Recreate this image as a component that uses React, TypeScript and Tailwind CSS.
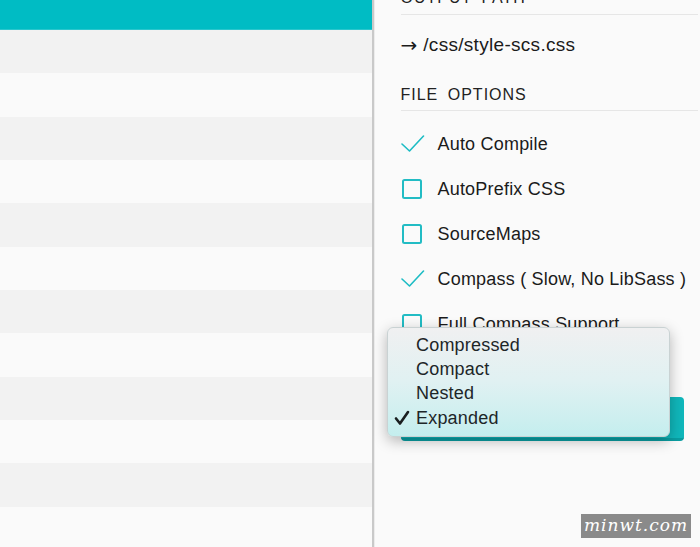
import React from "react";

const rows = Array.from({ length: 12 }, (_, i) => i);

function Check() {
  return (
    <svg width="24" height="20" viewBox="0 0 24 20" className="shrink-0">
      <path d="M1 10 L8.5 17 L22.5 2" fill="none" stroke="#1dbcc4" strokeWidth="1.6" strokeLinecap="round" strokeLinejoin="round" />
    </svg>
  );
}

function Box() {
  return (
    <div className="w-[24px] shrink-0 flex">
      <div className="ml-[1px] w-[20px] h-[20px] rounded-[2.5px] border-2 border-[#22bcc4]" />
    </div>
  );
}

function Item({ checked, label }: { checked: boolean; label: string }) {
  return (
    <div className="h-[45px] flex items-center">
      {checked ? <Check /> : <Box />}
      <span className="ml-[13px] text-[18px] text-[#1b1b1b] leading-[24px] tracking-[0.2px]">{label}</span>
    </div>
  );
}

export default function App() {
  return (
    <div
      className="relative w-[700px] h-[547px] overflow-hidden flex bg-[#fafafa]"
      style={{ fontFamily: '"Liberation Sans", Arial, sans-serif' }}
    >
      {/* left list */}
      <div className="w-[372px] shrink-0 flex flex-col">
        <div className="h-[30px] shrink-0 bg-[#00bcc4] border-b border-[#2ac6cd]" />
        {rows.map((i) => (
          <div
            key={i}
            className={`h-[43.333px] shrink-0 ${i % 2 === 0 ? "bg-[#f2f2f2]" : "bg-[#fafafa]"}`}
          />
        ))}
      </div>
      <div className="w-[1.5px] shrink-0 bg-[#c9c9c9]" />
      <div className="w-[1px] shrink-0 bg-[#ececec]" />

      {/* right panel */}
      <div className="flex-1 pl-[26px] pr-[2px] mt-[-12px] flex flex-col">
        <div className="text-[16px] leading-[20px] tracking-[1px] [word-spacing:4px] text-[#222] pb-[6px] border-b border-[#e6e6e6]">
          OUTPUT PATH
        </div>
        <div className="mt-[18px] h-[24px] text-[#1b1b1b] flex items-center">
          <span className="text-[20px] leading-[24px] mr-[6px]" style={{ fontFamily: '"DejaVu Sans", sans-serif' }}>
            →
          </span>
          <span className="text-[19px] leading-[24px] tracking-[0.3px]">/css/style-scs.css</span>
        </div>
        <div className="mt-[28px] text-[16px] leading-[20px] tracking-[1px] [word-spacing:4px] text-[#222] pb-[5px] border-b border-[#e6e6e6]">
          FILE OPTIONS
        </div>
        <div className="mt-[10px] flex flex-col">
          <Item checked label="Auto Compile" />
          <Item checked={false} label="AutoPrefix CSS" />
          <Item checked={false} label="SourceMaps" />
          <Item checked label="Compass ( Slow, No LibSass )" />
          <Item checked={false} label="Full Compass Support" />
        </div>
        <div className="mt-[51px] w-[283px] h-[44px] rounded-[4px] bg-[#10b7bb] border-b-[3px] border-[#0a9ea2]" />
      </div>

      {/* dropdown menu */}
      <div className="absolute left-[387px] top-[327px] w-[283px] h-[110px] rounded-[6px] border border-[#c9d2d3] bg-gradient-to-b from-[#f0f0f1] via-[#e0f1f2] to-[#c4eeee] shadow-[0_4px_14px_rgba(0,0,0,0.28)] pt-[5px]">
        {["Compressed", "Compact", "Nested", "Expanded"].map((t, i) => (
          <div key={t} className="relative h-[24.3px] flex items-center pl-[28px] text-[18px] text-[#1d2628] tracking-[0.2px]">
            {i === 3 && (
              <svg width="16" height="16" viewBox="0 0 16 16" className="absolute left-[6px] top-[4px]">
                <path d="M2 8.5 L6 13.5 L14 2" fill="none" stroke="#1a1f20" strokeWidth="2.6" strokeLinecap="round" strokeLinejoin="round" />
              </svg>
            )}
            {t}
          </div>
        ))}
      </div>

      {/* watermark */}
      <div className="absolute left-[581px] top-[514px] w-[110px] h-[24px] bg-[#8a8a8a] flex items-center justify-center">
        <span
          className="text-white italic text-[17px] tracking-[1px]"
          style={{ fontFamily: '"DejaVu Serif", serif' }}
        >
          minwt.com
        </span>
      </div>
    </div>
  );
}
